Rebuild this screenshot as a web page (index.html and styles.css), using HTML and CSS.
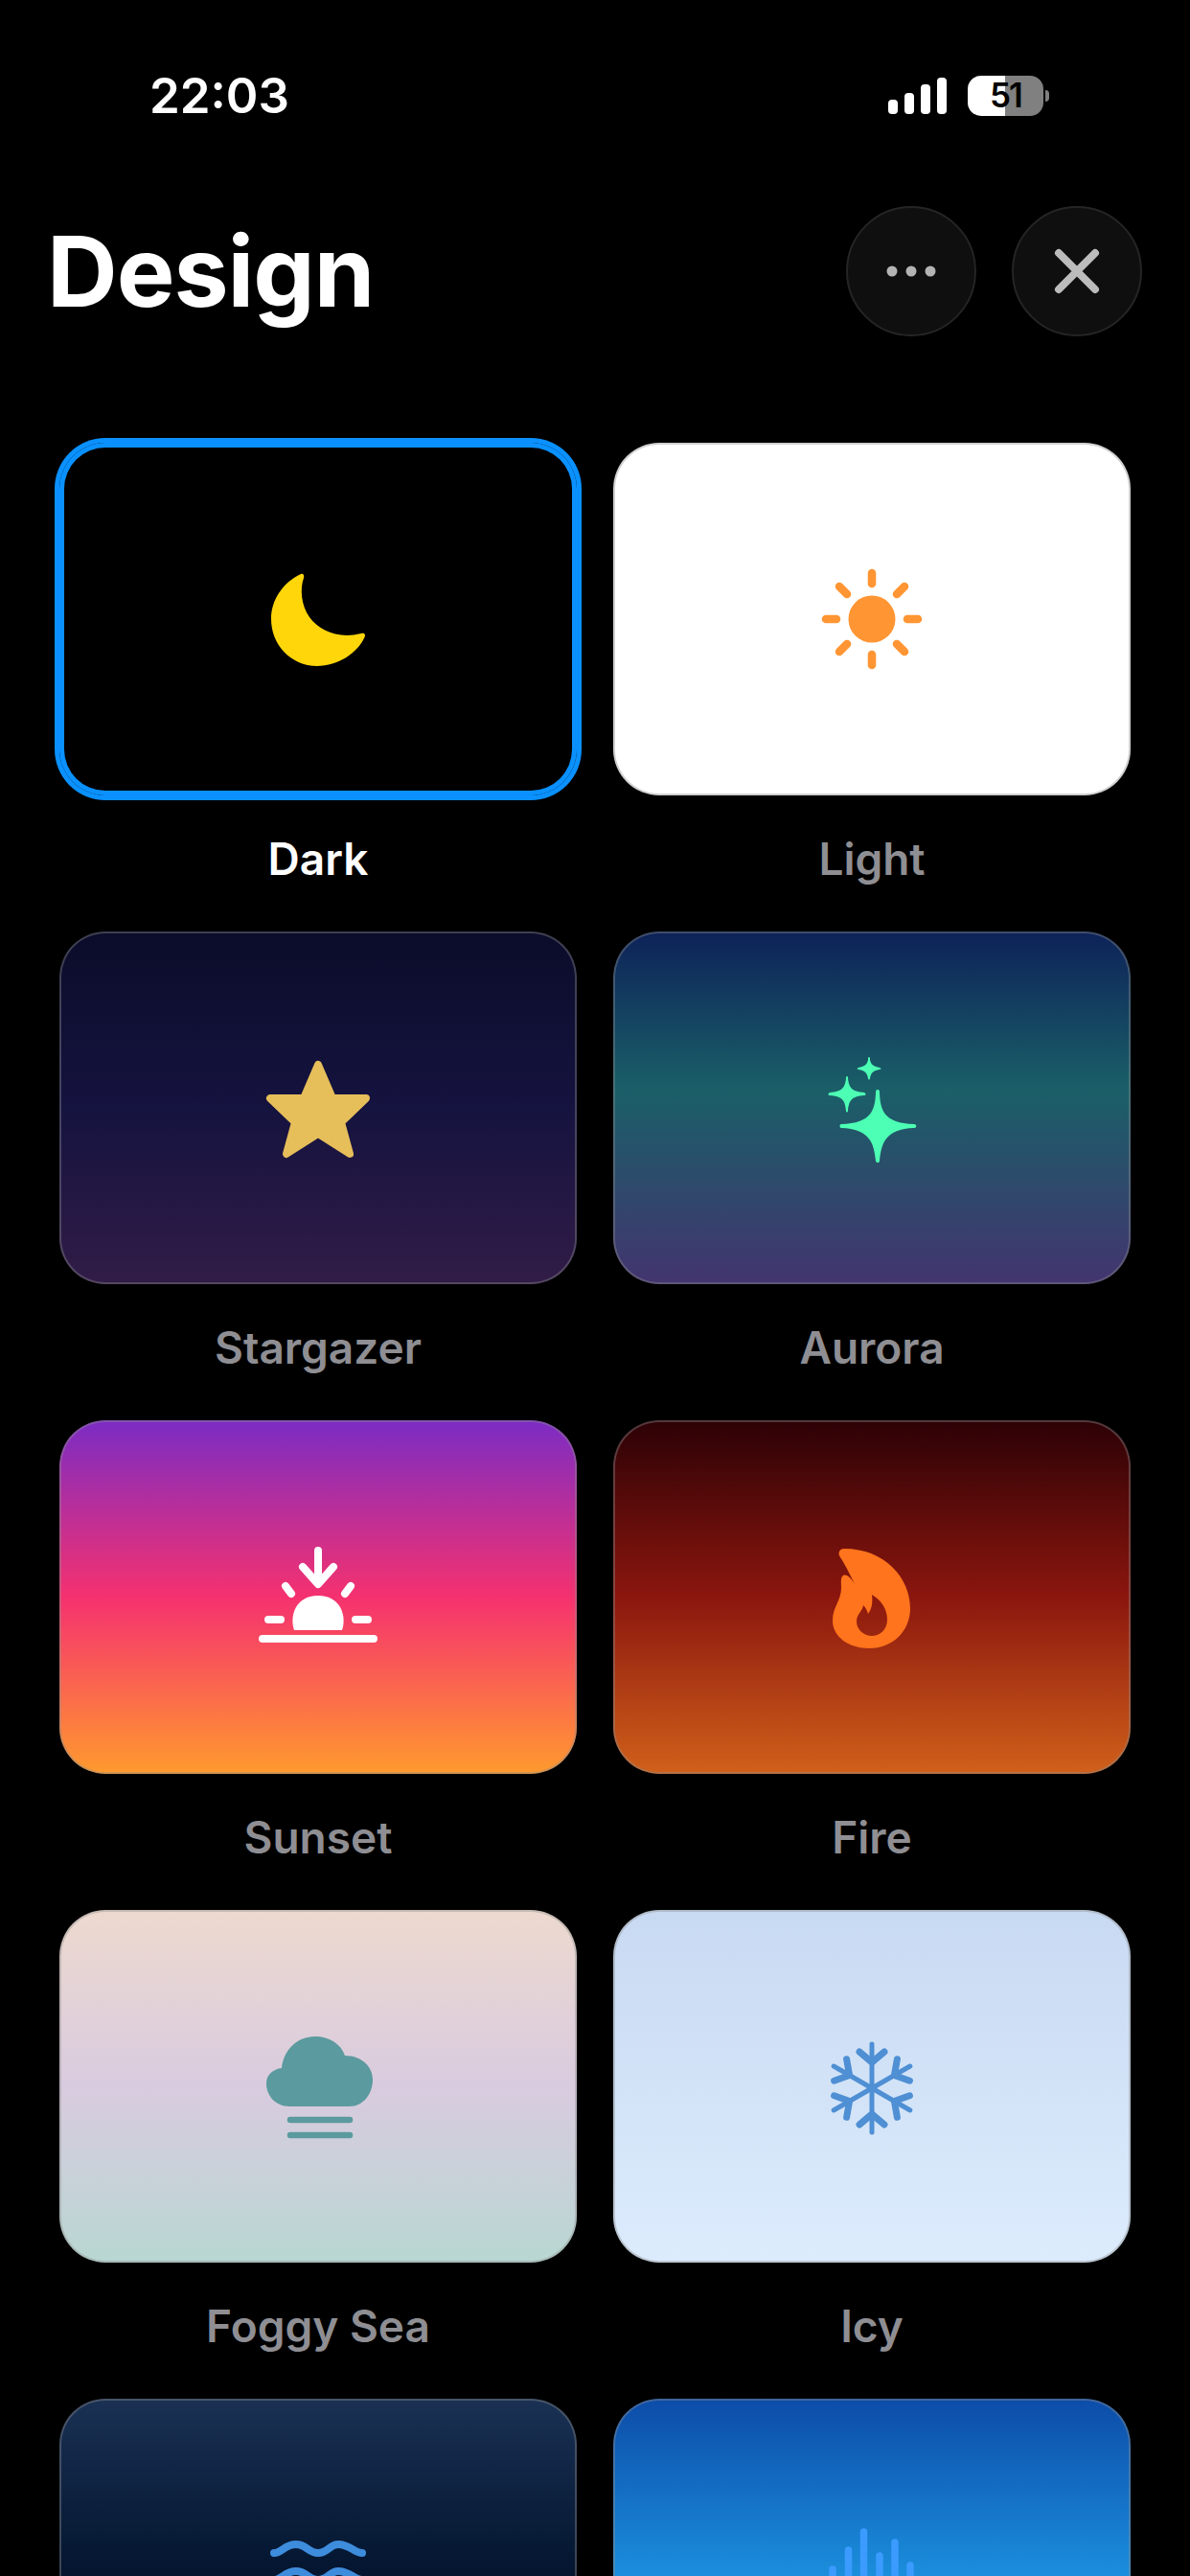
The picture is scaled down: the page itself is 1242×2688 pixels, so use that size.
FILE: index.html
```html
<!DOCTYPE html>
<html lang="en">
<head>
    <meta charset="UTF-8">
    <meta name="viewport" content="width=device-width, initial-scale=1.0">
    <title>Design</title>
    <link rel="stylesheet" href="styles.css">
</head>
<body>
    <div class="status-bar">
        <span class="time">22:03</span>
        <div class="status-icons">
            <div class="signal">
                <span class="bar-1"></span>
                <span class="bar-2"></span>
                <span class="bar-3"></span>
                <span class="bar-4"></span>
            </div>
            <div class="battery">
                <span class="battery-level">51</span>
                <span class="battery-nub"></span>
            </div>
        </div>
    </div>

    <header class="header">
        <h1>Design</h1>
        <div class="header-buttons">
            <button class="round-btn" type="button" aria-label="More">
                <svg viewBox="-34 -34 68 68"><g fill="#b4b4b4"><circle cx="-20" r="5.5"/><circle r="5.5"/><circle cx="20" r="5.5"/></g></svg>
            </button>
            <button class="round-btn" type="button" aria-label="Close">
                <svg viewBox="-34 -34 68 68"><path d="M-19 -19L19 19M19 -19L-19 19" stroke="#bcbcbc" stroke-width="8" stroke-linecap="round" fill="none"/></svg>
            </button>
        </div>
    </header>

    <main class="theme-grid">
        <div class="theme theme-selected">
            <div class="card card-dark">
                <svg class="icon" viewBox="-80 -80 160 160"><path fill="#ffd60a" d="M-18 -47C-16 -48 -14 -46 -15 -43C-19 -32 -18 -15 -9 -2C1 12 21 21 45 15C49 14 50 17 48 20C41 35 21 49 -1 49C-29 49 -49 26 -49 0C-49 -20 -37 -38 -18 -47Z"/></svg>
            </div>
            <p class="label">Dark</p>
        </div>
        <div class="theme">
            <div class="card card-light">
                <svg class="icon" viewBox="-80 -80 160 160">
                    <circle r="24.5" fill="#ff9533"/>
                    <path d="M0 -48V-37M0 37V48M-48 0H-37M37 0H48M-34 -34L-26 -26M34 -34L26 -26M-34 34L-26 26M34 34L26 26" stroke="#ff9533" stroke-width="8.5" stroke-linecap="round" fill="none"/>
                </svg>
            </div>
            <p class="label">Light</p>
        </div>

        <div class="theme">
            <div class="card card-stargazer">
                <svg class="icon" viewBox="-80 -80 160 160"><path fill="#e6be5a" stroke="#e6be5a" stroke-width="8" stroke-linejoin="round" d="M0 -45L15 -10H50L24 15L33 48L0 27L-33 48L-24 15L-50 -10H-15Z"/></svg>
            </div>
            <p class="label">Stargazer</p>
        </div>
        <div class="theme">
            <div class="card card-aurora">
                <svg class="icon" viewBox="-80 -80 160 160">
                    <g fill="#4dffb4">
                        <path d="M6 -19C8 -19 8 -17 8 -15C9 2 12 16 44 17C47 17 47 21 44 21C14 22 10 37 8 55C8 58 4 58 4 55C2 37 -2 22 -32 21C-34 21 -34 17 -32 17C0 16 3 2 4 -15C4 -17 4 -19 6 -19Z"/>
                        <path d="M-26 -33C-25 -33 -25 -32 -25 -31C-24 -22 -22 -17 -8 -16C-6 -15 -6 -13 -8 -13C-22 -12 -24 -7 -25 3C-25 5 -27 5 -27 3C-28 -7 -30 -12 -44 -13C-46 -13 -46 -15 -44 -16C-30 -17 -28 -22 -27 -31C-27 -32 -27 -33 -26 -33Z"/>
                        <path d="M-3 -53C-2 -53 -2 -52 -2 -50C-1 -45 2 -43 8 -42C10 -41 10 -40 8 -40C2 -39 -1 -37 -2 -31C-2 -29 -4 -29 -4 -31C-5 -37 -8 -39 -14 -40C-16 -40 -16 -41 -14 -42C-8 -43 -5 -45 -4 -50C-4 -52 -4 -53 -3 -53Z"/>
                    </g>
                </svg>
            </div>
            <p class="label">Aurora</p>
        </div>

        <div class="theme">
            <div class="card card-sunset">
                <svg class="icon" viewBox="-80 -80 160 160">
                    <path fill="#fff" d="M-25 34C-30 20 -24 -2 0 -2C24 -2 30 20 25 34Z"/>
                    <path d="M0 -49V-15M-16 -32L0 -14L16 -32M-34 -12L-28 -4M34 -12L28 -4M-52 23H-39M52 23H39M-58 43H58" stroke="#fff" stroke-width="8" stroke-linecap="round" stroke-linejoin="round" fill="none"/>
                </svg>
            </div>
            <p class="label">Sunset</p>
        </div>
        <div class="theme">
            <div class="card card-fire">
                <svg class="icon" viewBox="-80 -80 160 160"><path fill="#ff741c" fill-rule="evenodd" d="M-29 -51C-34 -51 -36 -46 -33 -42C-26 -31 -21 -20 -18 -14C-21 -19 -26 -25 -30 -23C-33 -21 -32 -16 -32 -10C-32 3 -41 10 -41 24C-41 41 -24 53 -3 53C22 53 40 35 40 11C40 -20 14 -51 -29 -51ZM0 -3C10 3 16 12 16 23C16 33 9 40 0 40C-9 40 -16 33 -16 25C-16 17 -10 15 -9 8C-6 11 -5 14 -4 17C0 12 1 5 0 -3Z"/></svg>
            </div>
            <p class="label">Fire</p>
        </div>

        <div class="theme">
            <div class="card card-foggy">
                <svg class="icon" viewBox="-80 -80 160 160">
                    <path fill="#5b9a9e" d="M-30 21C-44 21 -54 10 -54 -3C-54 -12 -47 -18 -38 -19C-36 -38 -22 -52 -3 -52C12 -52 24 -44 28 -32C45 -32 57 -21 57 -7C57 8 47 21 33 21Z"/>
                    <path d="M-29 35H33M-29 51H33" stroke="#5b9a9e" stroke-width="6.5" stroke-linecap="round" fill="none"/>
                </svg>
            </div>
            <p class="label">Foggy Sea</p>
        </div>
        <div class="theme">
            <div class="card card-icy">
                <svg class="icon" viewBox="-80 -80 160 160">
                    <g class="snowflake" fill="none" stroke="#4f8fd4" stroke-linecap="round" stroke-linejoin="round">
                        <g id="arm"><path stroke-width="5" d="M0 2V-46"/><path stroke-width="7" d="M-13 -38L0 -27L13 -38"/></g>
                        <use href="#arm" transform="rotate(60)"/>
                        <use href="#arm" transform="rotate(120)"/>
                        <use href="#arm" transform="rotate(180)"/>
                        <use href="#arm" transform="rotate(240)"/>
                        <use href="#arm" transform="rotate(300)"/>
                    </g>
                </svg>
            </div>
            <p class="label">Icy</p>
        </div>

        <div class="theme">
            <div class="card card-ocean">
                <svg class="icon" viewBox="-80 -80 160 160"><path d="M-46 -23C-38 -23 -35 -32 -23 -32C-12 -32 -10 -23 0 -23C10 -23 12 -32 21 -32C33 -32 38 -23 46 -23M-46 5C-38 5 -35 -4 -23 -4C-12 -4 -10 5 0 5C10 5 12 -4 21 -4C33 -4 38 5 46 5" stroke="#3e8cdc" stroke-width="8" stroke-linecap="round" fill="none"/></svg>
            </div>
        </div>
        <div class="theme">
            <div class="card card-sky">
                <svg class="icon" viewBox="-80 -80 160 160"><path d="M-41 -6V40M-24.5 -26V40M-8.5 -45V40M8 -20V40M24 -34V40M40 -10V40" stroke="#3b9bff" stroke-width="7.5" stroke-linecap="round" fill="none"/></svg>
            </div>
        </div>
    </main>
</body>
</html>
```

FILE: styles.css
```css
* {
    box-sizing: border-box;
    margin: 0;
    padding: 0;
}

html, body {
    height: 2688px;
    overflow: hidden;
}

body {
    font-family: Inter, 'Liberation Sans', sans-serif;
    background-color: #000;
    color: #fff;
}

.status-bar {
    display: flex;
    justify-content: space-between;
    align-items: center;
    height: 198px;
    padding: 0 153px 0 156px;
}

.time {
    font-size: 51px;
    font-weight: 600;
    line-height: 1;
}

.status-icons {
    display: flex;
    align-items: center;
    gap: 22px;
    padding-top: 1px;
}

.signal {
    display: flex;
    align-items: flex-end;
    gap: 7px;
    height: 38px;
}

.signal span {
    width: 10px;
    background-color: #fff;
    border-radius: 4px;
}

.bar-1 { height: 15px; }
.bar-2 { height: 22px; }
.bar-3 { height: 31px; }
.bar-4 { height: 38px; }

.battery {
    position: relative;
    width: 79px;
    height: 42px;
    border-radius: 14px;
    background: linear-gradient(to right, #fff 50%, #808080 50%);
    display: flex;
    justify-content: center;
    align-items: center;
}

.battery-level {
    color: #000;
    font-size: 35px;
    font-weight: 600;
    letter-spacing: -2px;
    line-height: 1;
}

.battery-nub {
    position: absolute;
    left: 81px;
    top: 15px;
    width: 4px;
    height: 12px;
    background-color: #808080;
    border-radius: 0 6px 6px 0;
}

.header {
    display: flex;
    justify-content: space-between;
    align-items: center;
    margin-top: 17px;
    height: 136px;
    padding: 0 50px 0 49px;
}

h1 {
    font-size: 102px;
    font-weight: 700;
    letter-spacing: -1px;
    line-height: 1;
}

.header-buttons {
    display: flex;
    gap: 37px;
}

.round-btn {
    display: flex;
    justify-content: center;
    align-items: center;
    width: 136px;
    height: 136px;
    border-radius: 50%;
    background-color: #0f0f0f;
    border: 2px solid #252525;
}

.round-btn svg {
    width: 68px;
    height: 68px;
}

.theme-grid {
    display: grid;
    grid-template-columns: 540px 540px;
    column-gap: 38px;
    grid-auto-rows: 510.4px;
    margin-top: 110.5px;
    padding-left: 62px;
}

.card {
    display: flex;
    justify-content: center;
    align-items: center;
    height: 368.5px;
    border-radius: 48px;
    border: 2px solid rgba(140, 140, 140, 0.4);
    background-origin: border-box;
}

.icon {
    width: 160px;
    height: 160px;
}

.label {
    margin-top: 41px;
    text-align: center;
    font-size: 46px;
    font-weight: 600;
    line-height: 50px;
    color: #8e8e93;
}

.theme-selected .label {
    color: #fff;
}

.theme-selected .card {
    border: none;
    box-shadow: 0 0 0 5px #0a91ff, inset 0 0 0 5px #0a91ff;
}

.snowflake {
    transform: translateY(2px);
}

.card-dark { background-color: #000; }
.card-light { background-color: #fff; }
.card-stargazer { background-image: linear-gradient(#0b0c2a, #15133f 50%, #311c47); }
.card-aurora { background-image: linear-gradient(#0d2258, #1a5f68 45%, #43346f); }
.card-sunset { background-image: linear-gradient(#7b2cc4, #f5316f 50%, #ff9a2e); }
.card-fire { background-image: linear-gradient(#2c0106, #8b160e 50%, #d0601a); }
.card-foggy { background-image: linear-gradient(#edd9ce, #d9cbdf 50%, #b8d7d2); }
.card-icy { background-image: linear-gradient(#c8daf2, #dcecfd); }
.card-ocean { background-image: linear-gradient(#1a3154, #041630 48%); }
.card-sky { background-image: linear-gradient(#0c4ca8, #1b8edc 50%, #2aa8f0); }
```
